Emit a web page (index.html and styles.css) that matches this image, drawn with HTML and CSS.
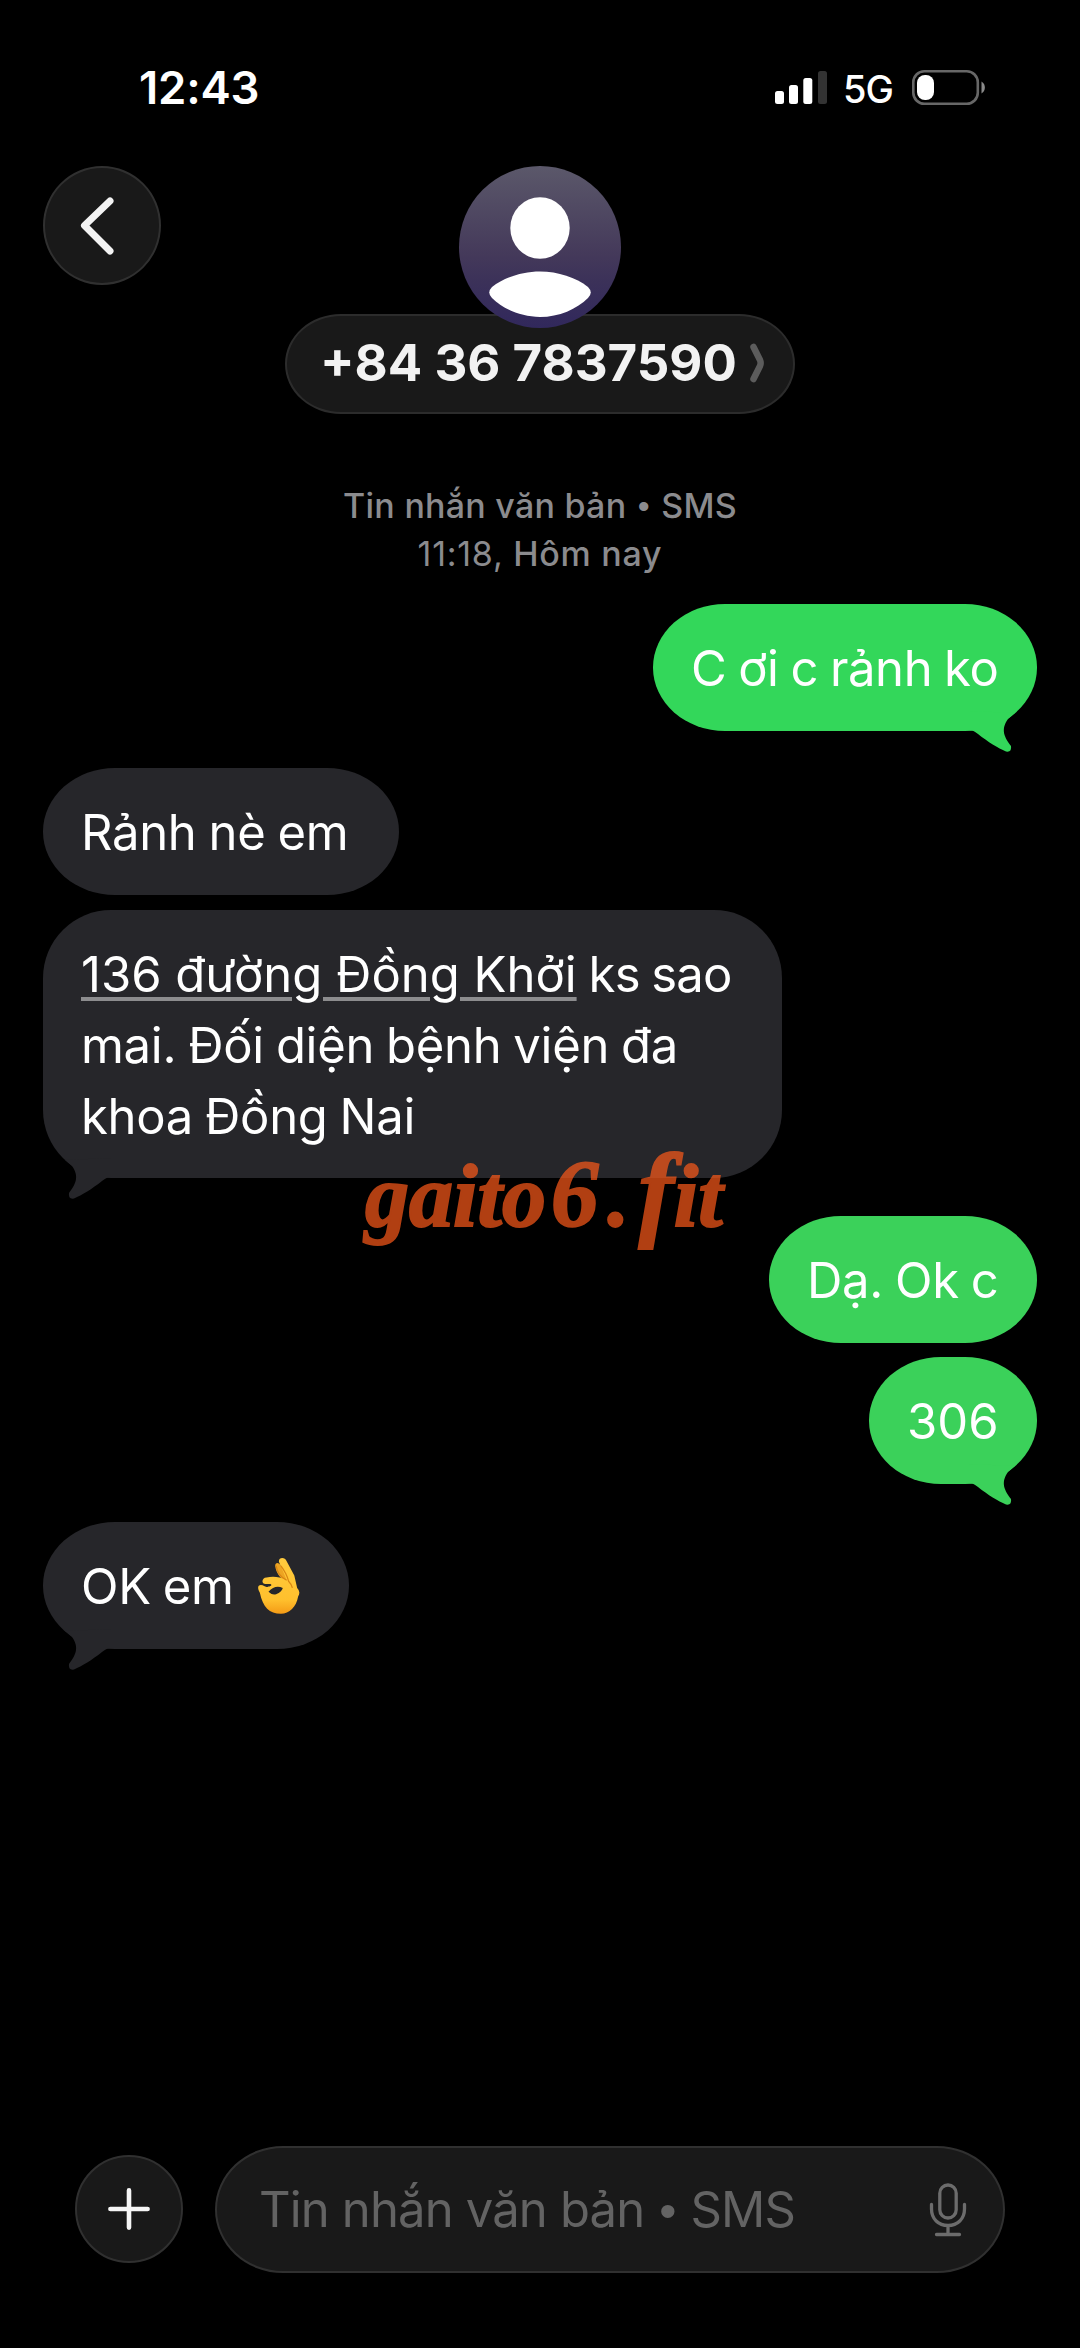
FILE: index.html
```html
<!DOCTYPE html>
<html lang="vi">
<head>
<meta charset="utf-8">
<title>+84 36 7837590</title>
<link rel="stylesheet" href="styles.css">
</head>
<body>
<div class="screen">
  <header class="status">
    <span class="clock">12:43</span>
    <div class="indicators">
      <svg class="signal" width="52" height="34" viewBox="0 0 52 34" fill="#fff"><rect x="0" y="20" width="9" height="13" rx="2.5"/><rect x="14" y="14" width="9" height="19" rx="2.5"/><rect x="28.3" y="7" width="9" height="26" rx="2.5"/><rect x="43" y="0" width="9" height="33" rx="2.5" fill="#333"/></svg>
      <span class="network">5G</span>
      <svg class="battery" width="74" height="36" viewBox="0 0 74 36"><rect x="1.3" y="1.3" width="64.5" height="32.4" rx="11" fill="none" stroke="#676767" stroke-width="2.6"/><rect x="5" y="5" width="17" height="25" rx="8" fill="#fff"/><path d="M69.5 11.5C74 14 74 21 69.5 23.500Z" fill="#8a8a8a"/></svg>
    </div>
  </header>

  <nav class="topbar">
    <button class="round back" aria-label="Quay lại"><svg width="34" height="58" viewBox="0 0 34 58"><path d="M30 4L4.500 28.500L30 54" fill="none" stroke="#f3f3f3" stroke-width="7" stroke-linecap="round" stroke-linejoin="round"/></svg></button>
    <div class="contact">
      <svg class="avatar" width="162" height="162" viewBox="0 0 162 162">
        <defs><linearGradient id="sky" x1="0" y1="0" x2="0" y2="1"><stop offset="0" stop-color="#5b586a"/><stop offset=".55" stop-color="#44395a"/><stop offset=".72" stop-color="#3b3159"/><stop offset="1" stop-color="#31285c"/></linearGradient></defs>
        <circle cx="81" cy="81" r="81" fill="url(#sky)"/>
        <ellipse cx="81" cy="62" rx="29.700" ry="30.800" fill="#fff"/>
        <path d="M81 105.500C99 105.500 117 111.500 129 121Q134.500 126.500 129 132C118 143 100 151 81 151S44 143 33 132Q27.500 126.500 33 121C45 111.500 63 105.500 81 105.500Z" fill="#fff"/>
      </svg>
      <div class="name"><span>+84 36 7837590</span><svg width="16" height="40" viewBox="0 0 16 40"><path d="M4.500 4L11 17Q12.300 20 11 23L4.500 36" fill="none" stroke="#5c5c5c" stroke-width="6.500" stroke-linecap="round" stroke-linejoin="round"/></svg></div>
    </div>
  </nav>

  <main class="thread">
    <div class="stamp"><p class="service">Tin nhắn văn bản <span class="sep">•</span> SMS</p><p class="when"><span class="hour">11:18,</span> Hôm nay</p></div>

    <div class="bubble out first w-hello">C ơi c rảnh ko<svg class="tail" width="50" height="42" viewBox="0 0 50 42"><path d="M0 19C4 19 6 21 9 23C19 31 29 37 37 40.500Q43 41.500 42 35C36 27 31 19 39 8L46 2L0 0Z" fill="currentColor"/></svg></div>
    <div class="bubble in turn w-free">Rảnh nè em</div>
    <div class="bubble in tall"><span class="address">136 đường Đồng Khởi</span> <span class="after">ks sao</span><br>mai. Đối diện bệnh viện đa<br>khoa Đồng Nai<svg class="tail" width="50" height="42" viewBox="0 0 50 42"><path d="M0 19C4 19 6 21 9 23C19 31 29 37 37 40.500Q43 41.500 42 35C36 27 31 19 39 8L46 2L0 0Z" fill="currentColor"/></svg></div>
    <div class="bubble out turn late w-yes">Dạ. Ok c</div>
    <div class="bubble out late w-room">306<svg class="tail" width="50" height="42" viewBox="0 0 50 42"><path d="M0 19C4 19 6 21 9 23C19 31 29 37 37 40.500Q43 41.500 42 35C36 27 31 19 39 8L46 2L0 0Z" fill="currentColor"/></svg></div>
    <div class="bubble in turn w-ok"><span>OK em</span><svg class="emoji" role="img" aria-label="OK" width="44" height="58" viewBox="0 0 46 60">
      <defs><linearGradient id="skin" x1="0" y1="0" x2="0" y2="1"><stop offset="0" stop-color="#ffcb3e"/><stop offset=".75" stop-color="#ffc02d"/><stop offset="1" stop-color="#f49b16"/></linearGradient></defs>
      <path d="M19 9C19 5 23 5 25 9L35 26L31 27C25 22 20 17 19 9Z" fill="#eda422"/>
      <path fill-rule="evenodd" fill="url(#skin)" d="M23 5C22 0 29-1 31 4L39 19L42 32Q46 36 43 41C41 52 34 59 25 59C13 59 6 52 3 37C0 32 1 29 4 29C7 29 8 31 10 31C13 31 17 29 14 28L9 28C4 28 5 21 10 21C17 20 23 20 31 24L27 14ZM12 36Q16 40 20 38.500Q26 36 27 32Q19 28 12 36Z"/>
      <path d="M20 9C21 16 25 21 31 24M25 9Q31 17 33 25Q36 28 37 32" fill="none" stroke="#d98613" stroke-width="1.300"/>
    </svg><svg class="tail" width="50" height="42" viewBox="0 0 50 42"><path d="M0 19C4 19 6 21 9 23C19 31 29 37 37 40.500Q43 41.500 42 35C36 27 31 19 39 8L46 2L0 0Z" fill="currentColor"/></svg></div>
    <div class="watermark"><span class="word">gaito</span><span class="six">6</span><span class="dot">.</span><span class="stem">f</span><span class="ext">it</span></div>
  </main>

  <footer class="composer">
    <button class="round plus" aria-label="Thêm"><svg width="42" height="42" viewBox="0 0 42 42"><path d="M21 2.400V39.600M2.400 21H39.600" stroke="#f5f5f5" stroke-width="4.600" stroke-linecap="round"/></svg></button>
    <div class="field"><span>Tin nhắn văn bản <span class="sep">•</span> SMS</span><svg width="38" height="54" viewBox="0 0 38 54" fill="none" stroke="#6c6c6c" stroke-width="3.300" stroke-linecap="round"><rect x="10.800" y="2" width="16.400" height="33" rx="8.200"/><path d="M2.500 21.500V26C2.500 36 9.500 42.500 19 42.500S35.500 36 35.500 26V21.500M19 42.500V51.500M7.500 51.500H30.500"/></svg></div>
  </footer>
</div>
</body>
</html>
```

FILE: styles.css
```css
* { box-sizing: border-box; }
body { margin: 0; background: #000; }
p { margin: 0; }
svg { display: block; flex: none; }

.screen {
  width: 1080px;
  height: 2348px;
  display: flex;
  flex-direction: column;
  overflow: hidden;
  background: #000;
  color: #fff;
  font-family: Inter, "Noto Sans", sans-serif;
}

.status {
  height: 166px;
  padding: 58px 94px 0 139px;
  display: flex;
  justify-content: space-between;
  align-items: flex-start;
}
.clock { font-size: 45.5px; font-weight: 600; line-height: 60px; letter-spacing: -.2px; }
.indicators { display: flex; align-items: flex-start; padding-top: 12px; }
.signal { margin-top: 1px; }
.network { width: 85px; padding-left: 16px; font-size: 38px; font-weight: 500; line-height: 38px; letter-spacing: -1px; }

.topbar {
  height: 312px;
  padding: 0 43px;
  display: grid;
  grid-template-columns: 118px 1fr 118px;
  align-items: start;
}
.round {
  display: flex;
  align-items: center;
  justify-content: center;
  padding: 0;
  border: 2px solid #303030;
  border-radius: 50%;
  background: #191919;
}
.back { width: 118px; height: 119px; padding-right: 10px; }
.contact { display: flex; flex-direction: column; align-items: center; }
.avatar { position: relative; z-index: 1; }
.name {
  width: 510px;
  height: 100px;
  margin-top: -14px;
  padding: 0 28px 3px 33px;
  display: flex;
  align-items: center;
  justify-content: space-between;
  border: 2px solid #2c2c2c;
  border-radius: 56px / 50px;
  background: #191919;
  color: #f2f2f2;
  font-size: 51px;
  font-weight: 650;
  letter-spacing: 0;
  white-space: nowrap;
}

.thread {
  position: relative;
  flex: 1;
  padding: 0 43px;
  display: flex;
  flex-direction: column;
  align-items: flex-start;
}
.stamp {
  align-self: center;
  height: 126px;
  padding-top: 4px;
  color: #8b8b8e;
  font-size: 34px;
  font-weight: 500;
  line-height: 48px;
  letter-spacing: .25px;
  text-align: center;
  white-space: nowrap;
}
.when { letter-spacing: .75px; }
.hour { font-weight: 400; }
.sep { margin: 0 2px; font-family: "Liberation Sans", sans-serif; line-height: 1; }

.bubble {
  position: relative;
  flex: none;
  margin-top: 15px;
  height: 127px;
  padding: 29px 38px 0;
  border-radius: 72px / 63.5px;
  font-size: 49px;
  line-height: 71px;
  letter-spacing: -.3px;
  word-spacing: -1.5px;
  white-space: nowrap;
}
.in { background: #26262a; color: #fff; }
.out { align-self: flex-end; background: #33d75a; }
.late { background: #3bd15a; }
.first { margin-top: 0; }
.turn { margin-top: 37px; }
.tall { width: 739px; height: 268px; border-radius: 68px; }
.tall + .turn { margin-top: 38px; }
.w-hello { width: 384px; letter-spacing: -.4px; }
.w-free { width: 356px; }
.w-yes { width: 268px; }
.w-room { width: 168px; margin-top: 14px; letter-spacing: 0; }
.w-room + .turn { margin-top: 38px; }
.w-ok { width: 306px; display: flex; }
.address {
  letter-spacing: 0;
  word-spacing: 0;
  text-decoration: underline;
  text-decoration-color: #8c8c8e;
  text-decoration-thickness: 4px;
  text-underline-offset: 5px;
}
.after { letter-spacing: -.8px; }
.tail { position: absolute; right: 18px; bottom: -22px; color: #33d75a; }
.late .tail { color: #3bd15a; }
.in .tail { right: auto; left: 18px; transform: scaleX(-1); color: #26262a; }
.emoji { margin: 6px 0 0 23px; }

.watermark {
  position: absolute;
  left: 365px;
  top: 663px;
  display: flex;
  align-items: baseline;
  color: #fc5a1a;
  opacity: .7;
  font: italic bold 88px/100px "Liberation Serif", serif;
  -webkit-text-stroke: 2px #fc5a1a;
  white-space: nowrap;
}
.six { margin-left: 5px; font-size: 95px; }
.dot { margin-left: 9px; }
.stem { margin-left: 9px; font-size: 106px; }
.ext { margin-left: 0; }

.composer {
  height: 202px;
  padding: 0 75px;
  display: flex;
  align-items: flex-start;
  gap: 32px;
}
.plus { width: 108px; height: 108px; margin-top: 9px; }
.field {
  flex: 1;
  height: 127px;
  padding: 0 36px 0 42px;
  display: flex;
  align-items: center;
  justify-content: space-between;
  border: 2px solid #303030;
  border-radius: 68px / 63.5px;
  background: #191919;
  color: #636363;
  font-size: 49px;
  letter-spacing: -.85px;
  white-space: nowrap;
}
```
